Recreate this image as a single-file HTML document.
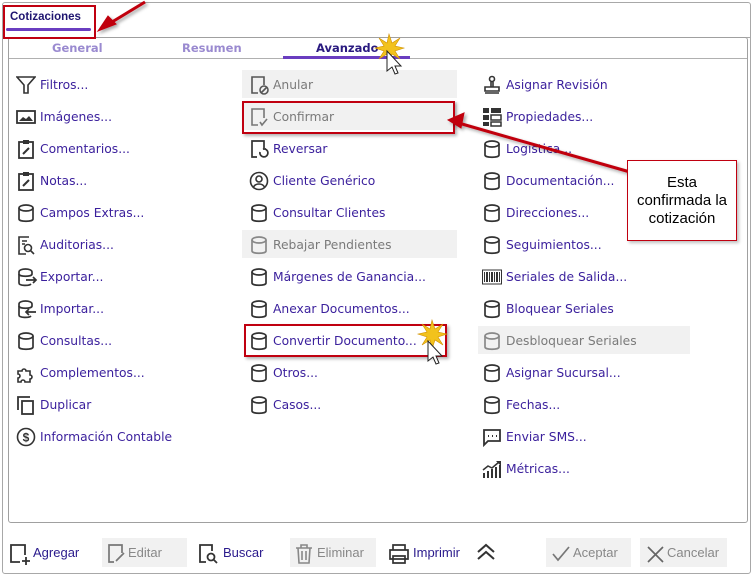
<!DOCTYPE html>
<html><head><meta charset="utf-8"><style>
*{box-sizing:border-box;margin:0;padding:0}
body{width:755px;height:576px;background:#fff;position:relative;overflow:hidden;font-family:"DejaVu Sans","Liberation Sans",sans-serif}
.outer{position:absolute;left:2px;top:2px;width:749px;height:572px;border:1px solid #a8a8a8;border-radius:3px}
.panel{position:absolute;left:8px;top:37px;width:740px;height:486px;border:1px solid #a0a0a0;border-radius:3px}
.it{position:absolute;height:28px;font-size:12.3px;color:#3a1f9c;line-height:28px;white-space:nowrap;margin-top:1px}
.it svg{position:absolute;left:0;top:4px}
.it span{position:absolute;left:24px;top:0}
.dis{background:#f1f1f1;color:#7a7a7a;margin-top:0}
.dis span{color:#7a7a7a;top:1px}
.dis svg{top:5px}
.tab{position:absolute;top:41px;font-size:11.5px;font-weight:bold;color:#9a8ad0}
.btn{position:absolute;top:538px;height:29px;font-family:"Liberation Sans",sans-serif;font-size:13px;line-height:29px;color:#2a1a8c}
.btn svg{position:absolute;top:5px}
.rb{position:absolute;border:2px solid #c00010;box-shadow:2px 2px 3px rgba(0,0,0,.3)}
</style></head><body>
<div class="outer"></div>
<div style="position:absolute;left:3px;top:37px;width:748px;border-top:1px solid #a8a8a8"></div>
<div style="position:absolute;left:10px;top:11px;font-family:'Liberation Sans',sans-serif;font-weight:bold;font-size:11.5px;color:#1e1470">Cotizaciones</div>
<div style="position:absolute;left:6px;top:28px;width:85px;height:3px;background:#6a3dc0;border-radius:2px"></div>
<div class="panel"></div>
<div style="position:absolute;left:9px;top:58px;width:738px;border-top:1px solid #b0b0b0"></div>
<div class="tab" style="left:52px">General</div>
<div class="tab" style="left:182px">Resumen</div>
<div class="tab" style="left:316px;color:#2a1a80">Avanzado</div>
<div style="position:absolute;left:283px;top:56px;width:127px;height:3px;background:#6a3dc0"></div>

<!-- col1 -->
<div class="it" style="left:16px;top:70px"><svg width="20" height="20" viewBox="0 0 20 20" fill="none" stroke="#333" stroke-width="1.6"><path d="M1 2h18L12 10v8H8v-8z"/></svg><span>Filtros...</span></div>
<div class="it" style="left:16px;top:102px"><svg width="20" height="20"><rect x="1" y="4" width="18" height="12" fill="none" stroke="#333" stroke-width="1.8"/><path d="M3 14l4-4 3 2 3-3 4 5z" fill="#333"/></svg><span>Imágenes...</span></div>
<div class="it" style="left:16px;top:134px"><svg width="20" height="20"><rect x="3" y="3" width="14" height="16" fill="none" stroke="#333" stroke-width="1.8"/><rect x="7" y="1" width="6" height="4" fill="#333"/><path d="M7 15l6-6" stroke="#333" stroke-width="2"/></svg><span>Comentarios...</span></div>
<div class="it" style="left:16px;top:166px"><svg width="20" height="20"><rect x="3" y="3" width="14" height="16" fill="none" stroke="#333" stroke-width="1.8"/><rect x="7" y="1" width="6" height="4" fill="#333"/><path d="M7 15l6-6" stroke="#333" stroke-width="2"/></svg><span>Notas...</span></div>
<div class="it" style="left:16px;top:198px"><svg width="20" height="20" fill="none" stroke="#333" stroke-width="1.7"><path d="M3 5v11c0 3 14 3 14 0V5"/><ellipse cx="10" cy="5" rx="7" ry="3"/></svg><span>Campos Extras...</span></div>
<div class="it" style="left:16px;top:230px"><svg width="20" height="20" fill="none" stroke="#333" stroke-width="1.6"><path d="M13 2H3v17h7"/><path d="M6 6h5M6 9h3"/><circle cx="12" cy="13" r="3.5"/><path d="M14.5 15.5L18 19"/></svg><span>Auditorias...</span></div>
<div class="it" style="left:16px;top:262px"><svg width="22" height="20" fill="none" stroke="#333" stroke-width="1.7"><path d="M16 7V5c0-4-13-4-13 0v11c0 3 10 3 12 1"/><path d="M3 7c0 3 13 3 13 0"/><path d="M10 13h10M17 10l3 3-3 3"/></svg><span>Exportar...</span></div>
<div class="it" style="left:16px;top:294px"><svg width="22" height="20" fill="none" stroke="#333" stroke-width="1.7"><path d="M16 7V5c0-4-13-4-13 0v11c0 3 10 3 12 1"/><path d="M3 7c0 3 13 3 13 0"/><path d="M20 13H10M13 10l-3 3 3 3"/></svg><span>Importar...</span></div>
<div class="it" style="left:16px;top:326px"><svg width="20" height="20" fill="none" stroke="#333" stroke-width="1.7"><path d="M3 5v11c0 3 14 3 14 0V5"/><ellipse cx="10" cy="5" rx="7" ry="3"/></svg><span>Consultas...</span></div>
<div class="it" style="left:16px;top:358px"><svg width="20" height="20" fill="none" stroke="#333" stroke-width="1.6"><path d="M2 8h4a2 2 0 1 1 4 0h4v4a2 2 0 1 1 0 4v3H9a2 2 0 1 0-4 0H2v-4a2 2 0 1 0 0-4z"/></svg><span>Complementos...</span></div>
<div class="it" style="left:16px;top:390px"><svg width="20" height="20" fill="none" stroke="#333" stroke-width="1.8"><path d="M2 15V2h12"/><rect x="6" y="6" width="11" height="13"/></svg><span>Duplicar</span></div>
<div class="it" style="left:16px;top:422px"><svg width="20" height="20" fill="none" stroke="#333" stroke-width="1.6"><circle cx="10" cy="10" r="8.5"/><text x="10" y="14.5" font-size="12" font-weight="bold" text-anchor="middle" fill="#333" stroke="none" font-family="Liberation Sans">$</text></svg><span>Información Contable</span></div>

<!-- col2 -->
<div class="it dis" style="left:242px;top:70px;width:215px"><svg style="left:7px" width="20" height="20" fill="none" stroke="#555" stroke-width="1.6"><path d="M9 18H3V2h12v8"/><circle cx="15" cy="15" r="4"/><path d="M12 18l6-6"/></svg><span style="left:31px">Anular</span></div>
<div class="it dis" style="left:242px;top:102px;width:215px"><svg style="left:7px" width="20" height="20" fill="none" stroke="#777" stroke-width="1.6"><path d="M9 18H3V2h12v9"/><path d="M11 15l2 3 5-6"/></svg><span style="left:31px">Confirmar</span></div>
<div class="it" style="left:249px;top:134px"><svg width="20" height="20" fill="none" stroke="#333" stroke-width="1.7"><path d="M8 18H3V2h12v7"/><path d="M11 13a4 4 0 1 0 3-3h3"/></svg><span>Reversar</span></div>
<div class="it" style="left:249px;top:166px"><svg width="20" height="20" fill="none" stroke="#333" stroke-width="1.6"><circle cx="10" cy="10" r="8.5"/><circle cx="10" cy="8" r="3"/><path d="M4.5 16c2-4 9-4 11 0"/></svg><span>Cliente Genérico</span></div>
<div class="it" style="left:249px;top:198px"><svg width="20" height="20" fill="none" stroke="#333" stroke-width="1.7"><path d="M3 5v11c0 3 14 3 14 0V5"/><ellipse cx="10" cy="5" rx="7" ry="3"/></svg><span>Consultar Clientes</span></div>
<div class="it dis" style="left:242px;top:230px;width:215px"><svg style="left:7px" width="20" height="20" fill="none" stroke="#888" stroke-width="1.7"><path d="M3 5v11c0 3 14 3 14 0V5"/><ellipse cx="10" cy="5" rx="7" ry="3"/></svg><span style="left:31px">Rebajar Pendientes</span></div>
<div class="it" style="left:249px;top:262px"><svg width="20" height="20" fill="none" stroke="#333" stroke-width="1.7"><path d="M3 5v11c0 3 14 3 14 0V5"/><ellipse cx="10" cy="5" rx="7" ry="3"/></svg><span>Márgenes de Ganancia...</span></div>
<div class="it" style="left:249px;top:294px"><svg width="20" height="20" fill="none" stroke="#333" stroke-width="1.7"><path d="M3 5v11c0 3 14 3 14 0V5"/><ellipse cx="10" cy="5" rx="7" ry="3"/></svg><span>Anexar Documentos...</span></div>
<div class="it" style="left:249px;top:326px"><svg width="20" height="20" fill="none" stroke="#333" stroke-width="1.7"><path d="M3 5v11c0 3 14 3 14 0V5"/><ellipse cx="10" cy="5" rx="7" ry="3"/></svg><span>Convertir Documento...</span></div>
<div class="it" style="left:249px;top:358px"><svg width="20" height="20" fill="none" stroke="#333" stroke-width="1.7"><path d="M3 5v11c0 3 14 3 14 0V5"/><ellipse cx="10" cy="5" rx="7" ry="3"/></svg><span>Otros...</span></div>
<div class="it" style="left:249px;top:390px"><svg width="20" height="20" fill="none" stroke="#333" stroke-width="1.7"><path d="M3 5v11c0 3 14 3 14 0V5"/><ellipse cx="10" cy="5" rx="7" ry="3"/></svg><span>Casos...</span></div>

<!-- col3 -->
<div class="it" style="left:482px;top:70px"><svg width="20" height="20" fill="none" stroke="#333" stroke-width="1.6"><circle cx="10" cy="4" r="2.5"/><path d="M9 7v5M11 7v5M3 12h14v4H3zM3 18h14"/></svg><span>Asignar Revisión</span></div>
<div class="it" style="left:482px;top:102px"><svg width="20" height="20" fill="#333"><rect x="1" y="1" width="6" height="5"/><rect x="9" y="1" width="10" height="5"/><rect x="1" y="8" width="6" height="5"/><rect x="9" y="8" width="10" height="5" fill="none" stroke="#333" stroke-width="1.5"/><rect x="1" y="15" width="6" height="4"/><rect x="9" y="15" width="10" height="4" fill="none" stroke="#333" stroke-width="1.5"/></svg><span>Propiedades...</span></div>
<div class="it" style="left:482px;top:134px"><svg width="20" height="20" fill="none" stroke="#333" stroke-width="1.7"><path d="M3 5v11c0 3 14 3 14 0V5"/><ellipse cx="10" cy="5" rx="7" ry="3"/></svg><span>Logística...</span></div>
<div class="it" style="left:482px;top:166px"><svg width="20" height="20" fill="none" stroke="#333" stroke-width="1.7"><path d="M3 5v11c0 3 14 3 14 0V5"/><ellipse cx="10" cy="5" rx="7" ry="3"/></svg><span>Documentación...</span></div>
<div class="it" style="left:482px;top:198px"><svg width="20" height="20" fill="none" stroke="#333" stroke-width="1.7"><path d="M3 5v11c0 3 14 3 14 0V5"/><ellipse cx="10" cy="5" rx="7" ry="3"/></svg><span>Direcciones...</span></div>
<div class="it" style="left:482px;top:230px"><svg width="20" height="20" fill="none" stroke="#333" stroke-width="1.7"><path d="M3 5v11c0 3 14 3 14 0V5"/><ellipse cx="10" cy="5" rx="7" ry="3"/></svg><span>Seguimientos...</span></div>
<div class="it" style="left:482px;top:262px"><svg width="20" height="20" fill="#333"><rect x="0.5" y="3" width="19" height="14" fill="none" stroke="#333"/><rect x="2" y="5" width="1" height="10"/><rect x="4" y="5" width="2" height="10"/><rect x="7" y="5" width="1" height="10"/><rect x="9" y="5" width="2" height="10"/><rect x="12" y="5" width="1" height="10"/><rect x="14" y="5" width="2" height="10"/><rect x="17" y="5" width="1" height="10"/></svg><span>Seriales de Salida...</span></div>
<div class="it" style="left:482px;top:294px"><svg width="20" height="20" fill="none" stroke="#333" stroke-width="1.7"><path d="M3 5v11c0 3 14 3 14 0V5"/><ellipse cx="10" cy="5" rx="7" ry="3"/></svg><span>Bloquear Seriales</span></div>
<div class="it dis" style="left:478px;top:326px;width:212px"><svg style="left:4px" width="20" height="20" fill="none" stroke="#888" stroke-width="1.7"><path d="M3 5v11c0 3 14 3 14 0V5"/><ellipse cx="10" cy="5" rx="7" ry="3"/></svg><span style="left:28px">Desbloquear Seriales</span></div>
<div class="it" style="left:482px;top:358px"><svg width="20" height="20" fill="none" stroke="#333" stroke-width="1.7"><path d="M3 5v11c0 3 14 3 14 0V5"/><ellipse cx="10" cy="5" rx="7" ry="3"/></svg><span>Asignar Sucursal...</span></div>
<div class="it" style="left:482px;top:390px"><svg width="20" height="20" fill="none" stroke="#333" stroke-width="1.7"><path d="M3 5v11c0 3 14 3 14 0V5"/><ellipse cx="10" cy="5" rx="7" ry="3"/></svg><span>Fechas...</span></div>
<div class="it" style="left:482px;top:422px"><svg width="20" height="20" fill="none" stroke="#333" stroke-width="1.8"><path d="M2 3h16v11H6l-4 4z"/><path d="M6 9h1M10 9h1M14 9h1" stroke-width="2"/></svg><span>Enviar SMS...</span></div>
<div class="it" style="left:482px;top:454px"><svg width="20" height="20" fill="#333"><rect x="1" y="14" width="2" height="5"/><rect x="5" y="12" width="2" height="7"/><rect x="9" y="10" width="2" height="9"/><rect x="13" y="8" width="2" height="11"/><rect x="17" y="6" width="2" height="13"/><path d="M1 11l5-4 4 2 7-6" fill="none" stroke="#333" stroke-width="1.5"/><path d="M14 2h5v5z"/></svg><span>Métricas...</span></div>

<!-- bottom buttons -->
<div class="btn" style="left:9px;width:80px"><svg style="left:0" width="22" height="22" fill="none" stroke="#333" stroke-width="1.8"><path d="M11 19H2V2h14v10"/><path d="M17 14v8M13 18h8"/></svg><span style="position:absolute;left:24px">Agregar</span></div>
<div class="btn" style="left:102px;width:85px;background:#f1f1f1;color:#888"><svg style="left:4px" width="22" height="22" fill="none" stroke="#777" stroke-width="1.7"><path d="M8 19H3V2h13v8"/><path d="M10 18l8-8"/></svg><span style="position:absolute;left:26px">Editar</span></div>
<div class="btn" style="left:198px;width:80px"><svg style="left:0" width="22" height="22" fill="none" stroke="#333" stroke-width="1.8"><path d="M8 19H2V2h12v6"/><circle cx="13" cy="14" r="3.5"/><path d="M15.5 16.5L19 20"/></svg><span style="position:absolute;left:25px">Buscar</span></div>
<div class="btn" style="left:290px;width:86px;background:#f1f1f1;color:#888"><svg style="left:3px" width="22" height="22" fill="none" stroke="#888" stroke-width="1.6"><path d="M3 5h16M8 5V2h6v3M5 5l1 15h10l1-15M9 8v9M13 8v9"/></svg><span style="position:absolute;left:27px">Eliminar</span></div>
<div class="btn" style="left:388px;width:90px"><svg style="left:0" width="22" height="22" fill="none" stroke="#333" stroke-width="1.7"><path d="M5 7V2h12v5M2 7h18v9H2zM5 13h12v7H5z"/></svg><span style="position:absolute;left:25px">Imprimir</span></div>
<svg style="position:absolute;left:475px;top:542px" width="22" height="20" fill="none" stroke="#333" stroke-width="2"><path d="M3 10l8-7 8 7M3 17l8-7 8 7"/></svg>
<div class="btn" style="left:546px;width:85px;background:#f1f1f1;color:#888"><svg style="left:4px" width="22" height="22" fill="none" stroke="#777" stroke-width="1.7"><path d="M3 11l5 6L19 4"/></svg><span style="position:absolute;left:27px">Aceptar</span></div>
<div class="btn" style="left:640px;width:87px;background:#f1f1f1;color:#888"><svg style="left:4px" width="22" height="22" fill="none" stroke="#666" stroke-width="1.7"><path d="M4 4l15 15M19 4L4 19"/></svg><span style="position:absolute;left:27px">Cancelar</span></div>

<!-- annotations -->
<div class="rb" style="left:3px;top:5px;width:93px;height:34px;box-shadow:none"></div>
<div class="rb" style="left:242px;top:101px;width:213px;height:33px"></div>
<div class="rb" style="left:244px;top:324px;width:203px;height:33px"></div>
<svg style="position:absolute;left:0;top:0" width="755" height="576">
<defs><filter id="s"><feDropShadow dx="2" dy="2" stdDeviation="1.5" flood-opacity=".35"/></filter></defs>
<g filter="url(#s)" stroke="#c00010" fill="#c00010">
<path d="M145 2L112 22" stroke-width="3"/><path d="M98 31l10-15 8 8z"/>
<path d="M630 172L462 124" stroke-width="3"/><path d="M448 120l16-7-3 15z"/>
</g>
<g fill="#f2c21c" stroke="#d09000" stroke-width=".6">
<path d="M389 34l3 9 8-5-5 8 9 2-9 3 5 8-8-5-3 9-2-9-8 5 5-8-9-3 9-2-5-8 8 5z"/>
<path d="M432 320l3 9 8-5-5 8 9 2-9 3 5 8-8-5-3 9-2-9-8 5 5-8-9-3 9-2-5-8 8 5z"/>
</g>
<g fill="#fff" stroke="#222" stroke-width="1">
<path d="M387 51v20l5-4 3 7 3-1-3-7 6 0z"/>
<path d="M428 341v20l5-4 3 7 3-1-3-7 6 0z"/>
</g>
</svg>
<div style="position:absolute;left:627px;top:160px;width:110px;height:81px;border:1px solid #c00010;background:#fff;font-family:'Liberation Sans',sans-serif;font-size:15px;line-height:18px;text-align:center;padding-top:13px;color:#000;box-shadow:2px 2px 3px rgba(0,0,0,.25)">Esta<br>confirmada la<br>cotización</div>
</body></html>
